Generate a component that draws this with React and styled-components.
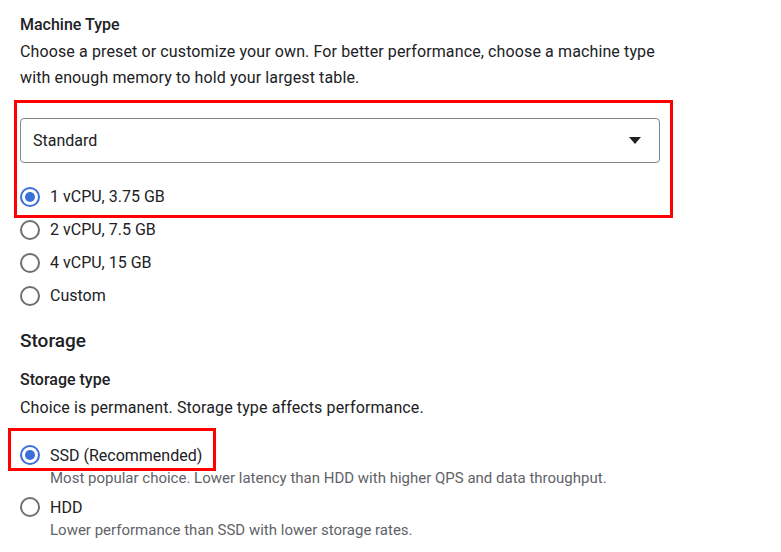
import React from "react";
import styled, { createGlobalStyle } from "styled-components";

const Global = createGlobalStyle`
  html, body { margin: 0; padding: 0; background: #fff; }
  body { font-family: Roboto, "Noto Sans", Arial, sans-serif; color: #202124; }
`;

const Page = styled.div`
  padding: 15px 20px 0 20px;
  width: 640px;
`;

const Label = styled.div`
  font-size: 16px;
  font-weight: 500;
  line-height: 20px;
  margin-bottom: ${(p) => p.$mb ?? 4}px;
`;

const Heading = styled.div`
  font-size: 19px;
  font-weight: 500;
  line-height: 24px;
  margin: 17px 0 17px;
`;

const Desc = styled.p`
  margin: 0;
  font-size: 16px;
  line-height: 26px;
  letter-spacing: 0.12px;
  color: #202124;
`;

const Highlight = styled.div`
  position: relative;
  display: flex;
  flex-direction: column;
  margin-top: ${(p) => p.$mt || 0}px;
`;

const RedBox = styled.div`
  position: absolute;
  pointer-events: none;
  border: 3px solid #ff0000;
  top: ${(p) => p.$top}px;
  left: ${(p) => p.$left}px;
  width: ${(p) => p.$w}px;
  height: ${(p) => p.$h}px;
  box-sizing: border-box;
`;

const Select = styled.div`
  height: 45px;
  box-sizing: border-box;
  border: 1px solid #80868b;
  border-radius: 4px;
  display: flex;
  align-items: center;
  justify-content: space-between;
  padding: 0 18px 0 12px;
  font-size: 16px;
  margin-bottom: 17px;
`;

const Caret = styled.span`
  width: 0;
  height: 0;
  border-left: 6.5px solid transparent;
  border-right: 6.5px solid transparent;
  border-top: 7px solid #202124;
`;

const Options = styled.div`
  display: flex;
  flex-direction: column;
  margin-top: ${(p) => p.$mt || 0}px;
`;

const Option = styled.div`
  display: flex;
  align-items: center;
  height: ${(p) => p.$h || 33}px;
  gap: 10px;
  font-size: 16px;
`;

const Radio = styled.span`
  width: 20px;
  height: 20px;
  box-sizing: border-box;
  border-radius: 50%;
  border: 2px solid ${(p) => (p.$checked ? "#3b6fd9" : "#6f6f6f")};
  display: flex;
  align-items: center;
  justify-content: center;
  flex-shrink: 0;
  &::after {
    content: "";
    width: 10px;
    height: 10px;
    border-radius: 50%;
    background: ${(p) => (p.$checked ? "#3b6fd9" : "transparent")};
  }
`;

const Sub = styled.div`
  padding-left: 30px;
  font-size: 15px;
  line-height: 20px;
  color: #5f6368;
`;

const machineOpts = ["2 vCPU, 7.5 GB", "4 vCPU, 15 GB", "Custom"];

export default function App() {
  return (
    <>
      <Global />
      <Page>
        <Label>Machine Type</Label>
        <Desc>
          Choose a preset or customize your own. For better performance, choose a machine type
          with enough memory to hold your largest table.
        </Desc>
        <Highlight $mt={27}>
          <RedBox $top={-18} $left={-6} $w={659} $h={118} />
          <Select>
            <span>Standard</span>
            <Caret />
          </Select>
          <Option>
            <Radio $checked />
            1 vCPU, 3.75 GB
          </Option>
        </Highlight>
        <Options>
          {machineOpts.map((o) => (
            <Option key={o}>
              <Radio />
              {o}
            </Option>
          ))}
        </Options>
        <Heading>Storage</Heading>
        <Label $mb={5}>Storage type</Label>
        <Desc>Choice is permanent. Storage type affects performance.</Desc>
        <Highlight $mt={21}>
          <RedBox $top={-14} $left={-12} $w={208} $h={43} />
          <Option $h={26}>
            <Radio $checked />
            SSD (Recommended)
          </Option>
        </Highlight>
        <Sub>Most popular choice. Lower latency than HDD with higher QPS and data throughput.</Sub>
        <Options $mt={6}>
          <Option $h={26}>
            <Radio />
            HDD
          </Option>
        </Options>
        <Sub>Lower performance than SSD with lower storage rates.</Sub>
      </Page>
    </>
  );
}
